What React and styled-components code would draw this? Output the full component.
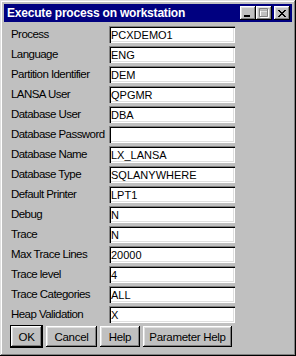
import React from 'react';
import styled, { createGlobalStyle } from 'styled-components';

const GlobalStyle = createGlobalStyle`
  html, body {
    margin: 0;
    padding: 0;
    background: #c0c0c0;
  }
  body {
    font-family: "Liberation Sans", Arial, sans-serif;
    font-size: 11px;
  }
`;

const Window = styled.div`
  box-sizing: border-box;
  width: 296px;
  height: 356px;
  padding: 4px;
  background: #c0c0c0;
  box-shadow: inset -1px -1px #000, inset 1px 1px #dfdfdf,
    inset -2px -2px #808080, inset 2px 2px #fff;
  display: flex;
  flex-direction: column;
`;

const TitleBar = styled.div`
  height: 18px;
  background: #000080;
  display: flex;
  align-items: center;
  padding: 0 2px 0 3px;
`;

const Title = styled.div`
  color: #fff;
  font-weight: bold;
  font-size: 12px;
  letter-spacing: -0.2px;
  flex: 1;
  white-space: nowrap;
`;

const CaptionButton = styled.div`
  box-sizing: border-box;
  width: 16px;
  height: 14px;
  background: #c0c0c0;
  box-shadow: inset -1px -1px #000, inset 1px 1px #fff,
    inset -2px -2px #808080, inset 2px 2px #dfdfdf;
  margin-left: ${p => (p.$gap ? '2px' : '0')};
  display: flex;
  align-items: center;
  justify-content: center;
  svg {
    display: block;
  }
`;

const Content = styled.div`
  padding: 4px 0 0 7px;
  display: grid;
  grid-template-columns: 98px 126px;
  grid-auto-rows: 17px;
  row-gap: 3px;
`;

const Label = styled.div`
  line-height: 17px;
  font-size: 11.5px;
  letter-spacing: -0.55px;
  color: #000;
  white-space: nowrap;
`;

const Field = styled.div`
  box-sizing: border-box;
  height: 17px;
  background: #fff;
  box-shadow: inset 1px 1px #808080, inset 2px 2px #000,
    inset -1px -1px #fff, inset -2px -2px #dfdfdf;
  padding: 0 0 0 2px;
  line-height: 18px;
  color: #000;
  white-space: nowrap;
  overflow: hidden;
`;

const ButtonRow = styled.div`
  display: flex;
  align-items: center;
  gap: 3px;
  margin: 2px 0 0 6px;
`;

const Button = styled.div`
  box-sizing: border-box;
  width: ${p => p.$w}px;
  height: ${p => (p.$default ? 23 : 21)}px;
  display: flex;
  align-items: center;
  justify-content: center;
  color: #000;
  font-size: 11.5px;
  letter-spacing: -0.3px;
  box-shadow: ${p =>
    p.$default
      ? 'inset 0 0 0 1px #000, inset -2px -2px #000, inset 2px 2px #fff, inset -3px -3px #808080, inset 3px 3px #dfdfdf'
      : 'inset -1px -1px #000, inset 1px 1px #fff, inset -2px -2px #808080, inset 2px 2px #dfdfdf'};
`;

const fields = [
  ['Process', 'PCXDEMO1'],
  ['Language', 'ENG'],
  ['Partition Identifier', 'DEM'],
  ['LANSA User', 'QPGMR'],
  ['Database User', 'DBA'],
  ['Database Password', ''],
  ['Database Name', 'LX_LANSA'],
  ['Database Type', 'SQLANYWHERE'],
  ['Default Printer', 'LPT1'],
  ['Debug', 'N'],
  ['Trace', 'N'],
  ['Max Trace Lines', '20000'],
  ['Trace level', '4'],
  ['Trace Categories', 'ALL'],
  ['Heap Validation', 'X'],
];

export default function App() {
  return (
    <>
      <GlobalStyle />
      <Window>
        <TitleBar>
          <Title>Execute process on workstation</Title>
          <CaptionButton>
            <svg width="8" height="7" viewBox="0 0 8 7">
              <rect x="0" y="5" width="6" height="2" fill="#000" />
            </svg>
          </CaptionButton>
          <CaptionButton>
            <svg width="10" height="10" viewBox="0 0 10 10">
              <path d="M1.5 1.5h8v8h-8z M1 3h9" fill="none" stroke="#fff" strokeWidth="1" />
              <path d="M0.5 0.5h8v8h-8z M0 2h9" fill="none" stroke="#808080" strokeWidth="1" />
            </svg>
          </CaptionButton>
          <CaptionButton $gap>
            <svg width="8" height="7" viewBox="0 0 8 7" shapeRendering="crispEdges">
              <path
                d="M0 0h2v1h-2zM6 0h2v1h-2zM1 1h2v1h-2zM5 1h2v1h-2zM2 2h4v1h-4zM3 3h2v1h-2zM2 4h4v1h-4zM1 5h2v1h-2zM5 5h2v1h-2zM0 6h2v1h-2zM6 6h2v1h-2z"
                fill="#000"
              />
            </svg>
          </CaptionButton>
        </TitleBar>
        <Content>
          {fields.map(([label, value]) => (
            <React.Fragment key={label}>
              <Label>{label}</Label>
              <Field>{value}</Field>
            </React.Fragment>
          ))}
        </Content>
        <ButtonRow>
          <Button $w={33} $default>OK</Button>
          <Button $w={51}>Cancel</Button>
          <Button $w={40}>Help</Button>
          <Button $w={89}>Parameter Help</Button>
        </ButtonRow>
      </Window>
    </>
  );
}
